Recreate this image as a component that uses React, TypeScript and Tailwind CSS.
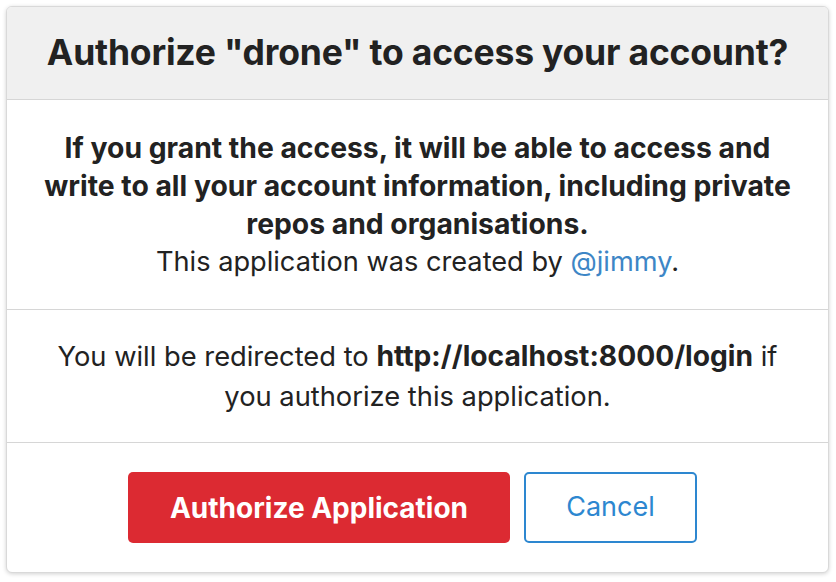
export default function App() {
  return (
    <div
      className="w-[836px] h-[582px] bg-white pt-[6px] pl-[6px]"
      style={{ fontFamily: "Inter, 'Noto Sans', sans-serif" }}
    >
      <div className="w-[823px] h-[567px] flex flex-col rounded-[6px] border border-[#d9d9d9] bg-white shadow-[0_1px_4px_rgba(0,0,0,0.18)] overflow-hidden text-[#222]">
        <div className="h-[93px] shrink-0 flex items-center justify-center bg-[#f0f0f0] border-b border-[#d6d6d6]">
          <h1 className="text-[35.5px] font-bold tracking-[-0.2px] whitespace-nowrap">
            Authorize "drone" to access your account?
          </h1>
        </div>
        <div className="h-[210px] shrink-0 flex flex-col items-center justify-center text-center leading-[38px] border-b border-[#d6d6d6] whitespace-nowrap">
          <p className="font-bold text-[28.3px]">
            If you grant the access, it will be able to access and
            <br />
            write to all your account information, including private
            <br />
            repos and organisations.
          </p>
          <p className="text-[27.2px]">
            This application was created by <a className="text-[#3d86c6]">@jimmy</a>.
          </p>
        </div>
        <div className="h-[133px] shrink-0 flex items-center justify-center text-center text-[27.3px] leading-[40px] border-b border-[#d6d6d6] whitespace-nowrap">
          <p>
            You will be redirected to <span className="font-bold text-[28.2px]">http://localhost:8000/login</span> if
            <br />
            you authorize this application.
          </p>
        </div>
        <div className="flex-1 flex items-center justify-center gap-[14px] pr-[10px]">
          <button className="w-[382px] h-[71px] rounded-[5px] bg-[#dc2a32] text-white text-[28px] font-bold">
            Authorize Application
          </button>
          <button className="w-[173px] h-[71px] rounded-[5px] border-2 border-[#2d87d0] text-[#2d87d0] text-[27px]">
            Cancel
          </button>
        </div>
      </div>
    </div>
  );
}
